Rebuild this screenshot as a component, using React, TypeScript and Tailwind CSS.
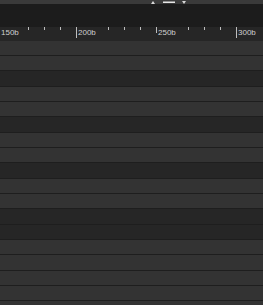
import React from "react";

const rows: { h: string; dark: boolean }[] = [
  { h: "h-[15px]", dark: false },
  { h: "h-[15px]", dark: false },
  { h: "h-[16px]", dark: true },
  { h: "h-[15px]", dark: false },
  { h: "h-[15px]", dark: false },
  { h: "h-[16px]", dark: true },
  { h: "h-[15px]", dark: false },
  { h: "h-[15px]", dark: false },
  { h: "h-[16px]", dark: true },
  { h: "h-[15px]", dark: false },
  { h: "h-[15px]", dark: false },
  { h: "h-[16px]", dark: true },
  { h: "h-[15px]", dark: true },
  { h: "h-[15px]", dark: false },
  { h: "h-[16px]", dark: false },
  { h: "h-[15px]", dark: false },
  { h: "h-[15px]", dark: false },
  { h: "h-[16px]", dark: false },
];

const minor = [28, 44, 60, 108, 124, 140, 188, 204, 220];
const labels = [
  { x: 1, t: "150b" },
  { x: 78, t: "200b" },
  { x: 158, t: "250b" },
  { x: 238, t: "300b" },
];

export default function App() {
  return (
    <div
      className="w-[263px] h-[305px] overflow-hidden bg-[#1c1c1c] flex flex-col"
      style={{ fontFamily: '"Liberation Sans", Arial, sans-serif' }}
    >
      <div className="relative h-[4px] shrink-0 bg-[#3a3a3a]">
        <svg className="absolute left-0 top-0" width="263" height="4">
          <polygon points="151,4 153,1 155,4" fill="#d8d8d8" />
          <rect x="163" y="1.5" width="12" height="1.5" fill="#e6e6e6" />
          <polygon points="182,1 186,1 184,4" fill="#d8d8d8" />
        </svg>
      </div>
      <div className="h-[23px] shrink-0 bg-[#1c1c1c]" />
      <div className="relative h-[14px] shrink-0 bg-[#262626]">
        <svg className="absolute left-0 top-0" width="263" height="14">
          {minor.map((x) => (
            <rect key={x} x={x} y={0} width={1} height={3} fill="#bdbdbd" />
          ))}
          <rect x={76} y={0} width={1} height={11} fill="#bdbdbd" />
          <rect x={156} y={0} width={1} height={6} fill="#bdbdbd" />
          <rect x={236} y={0} width={1} height={11} fill="#bdbdbd" />
        </svg>
        {labels.map((l) => (
          <span
            key={l.t}
            className="absolute top-[1px] text-[8px] leading-[10px] text-[#d0d0d0]"
            style={{ left: l.x }}
          >
            {l.t}
          </span>
        ))}
      </div>
      <div className="flex flex-col">
        {rows.map((r, i) => (
          <div
            key={i}
            className={`${r.h} shrink-0 border-b border-[#1e1e1e] ${
              r.dark ? "bg-[#262626]" : "bg-[#333333]"
            }`}
          />
        ))}
      </div>
    </div>
  );
}
